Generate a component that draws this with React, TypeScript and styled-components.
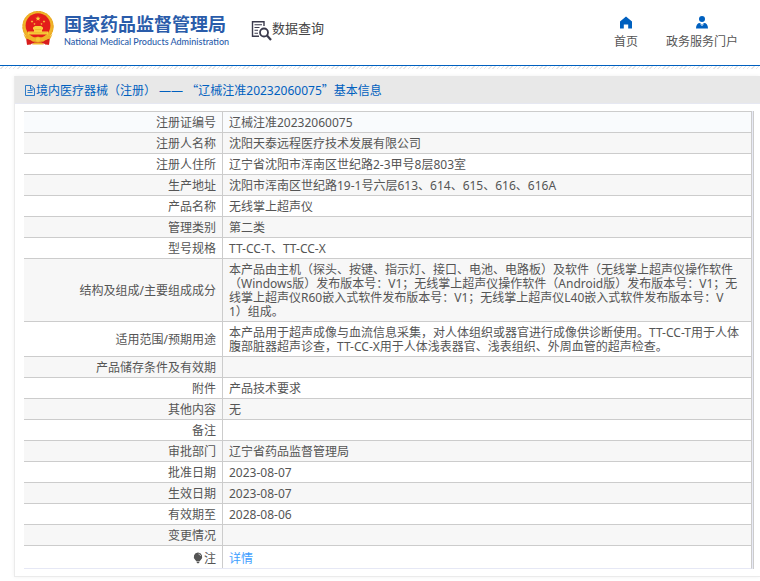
import React from "react";
import styled, { createGlobalStyle } from "styled-components";

const GlobalStyle = createGlobalStyle`
  * { box-sizing: border-box; }
  body {
    margin: 0;
    background: #fff;
    color: #555;
    font: 12px/14px "Noto Sans", "Noto Sans CJK SC", sans-serif;
    text-spacing-trim: space-all;
  }
`;

const Header = styled.header`
  display: flex;
  align-items: flex-start;
  height: 66px;
  padding: 10px 22px 0 21px;
  border-bottom: 1px solid #0060bf;
`;

const Brand = styled.a`
  display: flex;
  gap: 9px;
  color: #2a5caa;
  text-decoration: none;
`;

const BrandText = styled.div`
  display: flex;
  flex-direction: column;
  padding-top: 3px;
  white-space: nowrap;
`;

const BrandName = styled.strong`
  font-size: 18px;
  line-height: 22px;
  font-weight: 700;
`;

const BrandLatin = styled.span`
  font: 500 9px/13px Lato, sans-serif;
`;

const Section = styled.div`
  display: flex;
  align-items: flex-start;
  margin: 10px 0 0 22px;
  color: #444;
  font-size: 13px;
  line-height: 17px;
  white-space: nowrap;
`;

const Nav = styled.nav`
  display: flex;
  gap: 28px;
  margin: 5px 0 0 auto;
`;

const NavLink = styled.a`
  display: flex;
  flex-direction: column;
  align-items: center;
  gap: 5px;
  color: #555;
  line-height: 16px;
  text-decoration: none;
  white-space: nowrap;
`;

const Hatch = styled.div`
  height: 3px;
  background: repeating-linear-gradient(135deg, #fff 0 2px, #e6e6e6 2px 3px);
`;

const Panel = styled.main`
  margin: 7px 0 4px 14px;
  border: solid #ebebeb;
  border-width: 0 0 1px 1px;
  box-shadow: 0 0 4px rgba(0, 0, 0, 0.06);
`;

const PanelTitle = styled.h1`
  display: flex;
  align-items: center;
  gap: 1px;
  height: 28px;
  margin: 0;
  padding: 2px 0 0 10px;
  border-bottom: 1px solid #e6e8f2;
  background: #e8e8e8;
  color: #0060bf;
  font-size: 12px;
  font-weight: 400;
  white-space: pre;
`;

const WideMark = styled.span`
  font-family: "Noto Sans CJK SC", sans-serif;
`;

const TableFrame = styled.div`
  margin: 7px 6px 7px 9px;
  padding-right: 1px;
  border-right: 1px solid #ccc;
  background: #e8eaf6;
`;

const Table = styled.table`
  width: 100%;
  table-layout: fixed;
  border-collapse: separate;
  border-spacing: 0;
  background: #fff;
  border-right: 1px solid #ccc;
  border-bottom: 1px solid #e6e8f5;
`;

const Row = styled.tr<{ $first: boolean }>`
  background: ${(p) => (p.$first ? "#f9fbfd" : "#fff")};
  &:nth-child(even) { background: #f7f7f7; }
  &:last-child > * { height: 23px; padding-top: 6px; }
`;

const Label = styled.th`
  width: 199px;
  height: 21px;
  padding: 4px 6px 2px;
  border: solid #ccc;
  border-width: 1px 1px 0 0;
  font-weight: 400;
  text-align: right;
  vertical-align: middle;
`;

const Value = styled.td`
  padding: 4px 10px 2px 6px;
  border-top: 1px solid #ccc;
  vertical-align: middle;
  word-break: break-all;
`;

const DetailLink = styled.a`
  color: #409eff;
  text-decoration: none;
`;

const Bulb = styled.svg`
  vertical-align: -1px;
  margin-right: 1px;
`;

const star = (x: number, y: number, r: number) =>
  Array.from({ length: 10 }, (_, i) => {
    const a = (Math.PI / 5) * i - Math.PI / 2;
    const d = i % 2 ? r * 0.42 : r;
    return `${x + d * Math.cos(a)},${y + d * Math.sin(a)}`;
  }).join(" ");

const Emblem = () => (
  <svg width="34" height="36" viewBox="0 0 34 36" aria-hidden="true">
    <path d="M5 24 6 34.500l6-1h10l6 1 1-10.500z" fill="#d81e1c" />
    <circle cx="17" cy="16.5" r="15.6" fill="#f0b429" />
    <circle cx="17" cy="16.5" r="15" fill="none" stroke="#e9a524" strokeWidth="1" strokeDasharray="2 1.4" />
    <circle cx="17" cy="15.6" r="12.4" fill="#e31d1a" />
    <g fill="#f9cf3d">
      <polygon points={star(17, 8.6, 2.7)} />
      <polygon points={star(11, 11.5, 1.4)} />
      <polygon points={star(13.5, 14, 1.2)} />
      <polygon points={star(20.5, 14, 1.2)} />
      <polygon points={star(23, 11.5, 1.4)} />
      <path d="M12 17.5 14 16h6l2 1.500v2h-1v2h6v3H7v-3h6v-2h-1z" />
    </g>
    <path d="M8 22.8h18M14 19.5h6" stroke="#e9a524" strokeWidth=".6" />
    <path d="M2.500 24C6 28 10 28.500 12.500 28.500c1-2 8-2 9 0 2.500 0 6.500-.5 10-4.500l-2 4.500-7.500 3-5-1.500-5 1.500-7.500-3z" fill="#f0b429" />
    <path d="M5.500 28.500 11 31l-1 3.500-4 .3zM28.500 28.500 23 31l1 3.500 4 .3z" fill="#d81e1c" />
    <circle cx="17" cy="29.500" r="2.600" fill="#f7c636" stroke="#e9a524" strokeWidth=".6" />
    <path d="m11 34.500 2.500-2h7l2.500 2z" fill="#f0b429" />
  </svg>
);

const SearchDoc = () => (
  <svg width="21" height="21" viewBox="0 0 21 21" fill="none" stroke="#3b3b4d" aria-hidden="true">
    <path d="M8 16.300H1.500V1.700h11.500V6" strokeWidth="1.400" />
    <path d="M3.500 4.700h7.500M3.500 7.500h5M3.500 10.300h3.500M3.500 13.200h3.500" strokeWidth="1.100" />
    <circle cx="13" cy="12.500" r="4" strokeWidth="1.800" />
    <path d="m16 15.500 4 4.500" strokeWidth="2.200" />
  </svg>
);

const Home = () => (
  <svg width="14" height="14" viewBox="0 0 14 14" fill="#0060bf" aria-hidden="true">
    <path d="M7 1.500 1 6.500V13.500h3.800V9.500h4.400v4H13V6.500z" />
  </svg>
);

const User = () => (
  <svg width="14" height="14" viewBox="0 0 14 14" fill="#0060bf" aria-hidden="true">
    <circle cx="7" cy="4" r="3" />
    <path d="M1 13.500c0-3.500 1.500-5.500 4-5.500l2 1.800L9 8c2.500 0 4 2 4 5.500z" />
    <path d="m5.500 8.800 1.500 2 1.500-2" fill="none" stroke="#fff" strokeWidth=".7" />
  </svg>
);

const FileIcon = () => (
  <svg width="10" height="12" viewBox="0 0 10 12" fill="none" stroke="#0060bf" strokeWidth=".8" aria-hidden="true">
    <path d="M.5 .5H6l3.500 3v7h-9zM5.500 .5V4h4M2.500 5.500h5M2.500 7.500h5" />
  </svg>
);

const BulbIcon = () => (
  <Bulb width="10" height="12" viewBox="0 0 10 12" aria-hidden="true">
    <path d="M5 .5a4.200 4.200 0 0 0-2.700 7.400L3.600 9.500h2.800l1.300-1.600A4.200 4.200 0 0 0 5 .5zM3.700 10h2.600v.8L5 11.600l-1.300-.8z" fill="#555" />
    <path d="M5.500 2c1.200.1 1.900.9 2 2" fill="none" stroke="#fff" strokeWidth=".7" />
  </Bulb>
);

const rows: [React.ReactNode, React.ReactNode][] = [
  ["注册证编号", "辽械注准20232060075"],
  ["注册人名称", "沈阳天泰远程医疗技术发展有限公司"],
  ["注册人住所", "辽宁省沈阳市浑南区世纪路2-3甲号8层803室"],
  ["生产地址", "沈阳市浑南区世纪路19-1号六层613、614、615、616、616A"],
  ["产品名称", "无线掌上超声仪"],
  ["管理类别", "第二类"],
  ["型号规格", "TT-CC-T、TT-CC-X"],
  [
    "结构及组成/主要组成成分",
    "本产品由主机（探头、按键、指示灯、接口、电池、电路板）及软件（无线掌上超声仪操作软件（Windows版）发布版本号：V1；无线掌上超声仪操作软件（Android版）发布版本号：V1；无线掌上超声仪R60嵌入式软件发布版本号：V1；无线掌上超声仪L40嵌入式软件发布版本号：V1）组成。",
  ],
  [
    "适用范围/预期用途",
    "本产品用于超声成像与血流信息采集，对人体组织或器官进行成像供诊断使用。TT-CC-T用于人体腹部脏器超声诊查，TT-CC-X用于人体浅表器官、浅表组织、外周血管的超声检查。",
  ],
  ["产品储存条件及有效期", ""],
  ["附件", "产品技术要求"],
  ["其他内容", "无"],
  ["备注", ""],
  ["审批部门", "辽宁省药品监督管理局"],
  ["批准日期", "2023-08-07"],
  ["生效日期", "2023-08-07"],
  ["有效期至", "2028-08-06"],
  ["变更情况", ""],
  [<><BulbIcon />注</>, <DetailLink href="#detail">详情</DetailLink>],
];

export default function App() {
  return (
    <div lang="zh-CN">
      <GlobalStyle />
      <Header>
        <Brand href="#top">
          <Emblem />
          <BrandText>
            <BrandName>国家药品监督管理局</BrandName>
            <BrandLatin>National Medical Products Administration</BrandLatin>
          </BrandText>
        </Brand>
        <Section>
          <SearchDoc />
          数据查询
        </Section>
        <Nav>
          <NavLink href="#home"><Home />首页</NavLink>
          <NavLink href="#portal"><User />政务服务门户</NavLink>
        </Nav>
      </Header>
      <Hatch />
      <Panel>
        <PanelTitle>
          <FileIcon />
          <span>
            境内医疗器械（注册） —— <WideMark>“</WideMark>辽械注准20232060075<WideMark>”</WideMark>基本信息
          </span>
        </PanelTitle>
        <TableFrame>
          <Table>
            <tbody>
              {rows.map(([label, value], i) => (
                <Row key={i} $first={i === 0}>
                  <Label scope="row">{label}</Label>
                  <Value>{value}</Value>
                </Row>
              ))}
            </tbody>
          </Table>
        </TableFrame>
      </Panel>
    </div>
  );
}
